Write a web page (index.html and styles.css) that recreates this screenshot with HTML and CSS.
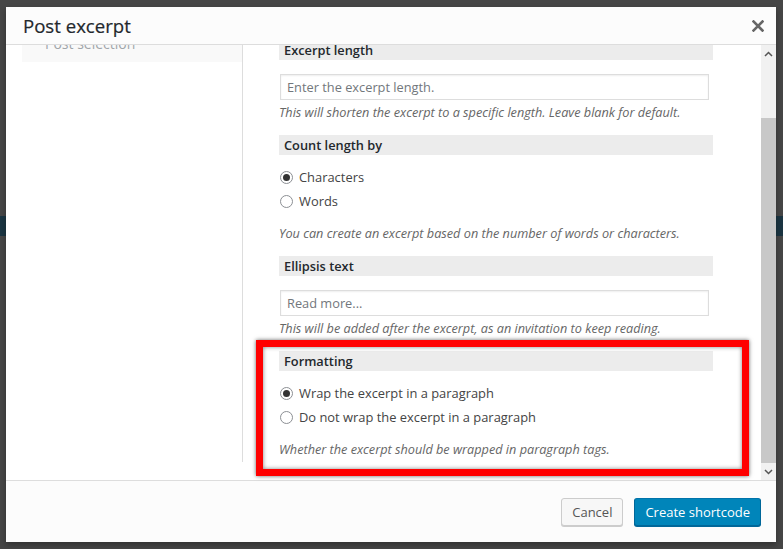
FILE: index.html
```html
<!DOCTYPE html>
<html>
<head>
  <meta charset="UTF-8">
  <title>Post excerpt</title>
  <meta name="viewport" content="width=device-width, initial-scale=1.0"/>
  <link rel="stylesheet" href="styles.css">
</head>
<body>
  <div class="backdrop">
    <div class="backdrop-top"></div>
    <div class="backdrop-band"></div>
  </div>

  <div class="modal">
    <div class="modal-header">
      <h1>Post excerpt</h1>
      <button class="close" type="button" title="Close">
        <svg width="12" height="12" viewBox="0 0 12 12"><path d="M1.5 1.5 L10.5 10.5 M10.5 1.5 L1.5 10.5" stroke="#666" stroke-width="2.6" stroke-linecap="square"/></svg>
      </button>
    </div>

    <div class="modal-body">
      <div class="panes">
        <div class="sidebar">
          <div class="side-item">Post selection</div>
        </div>

        <div class="main">
          <h2 class="sec-title first">Excerpt length</h2>
          <input class="text-field" type="text" placeholder="Enter the excerpt length.">
          <p class="hint">This will shorten the excerpt to a specific length. Leave blank for default.</p>

          <h2 class="sec-title">Count length by</h2>
          <div class="radios">
            <label class="radio-row"><span class="radio checked"></span>Characters</label>
            <label class="radio-row"><span class="radio"></span>Words</label>
          </div>
          <p class="hint spaced">You can create an excerpt based on the number of words or characters.</p>

          <h2 class="sec-title">Ellipsis text</h2>
          <input class="text-field" type="text" placeholder="Read more...">
          <p class="hint">This will be added after the excerpt, as an invitation to keep reading.</p>

          <h2 class="sec-title">Formatting</h2>
          <div class="radios">
            <label class="radio-row"><span class="radio checked"></span>Wrap the excerpt in a paragraph</label>
            <label class="radio-row"><span class="radio"></span>Do not wrap the excerpt in a paragraph</label>
          </div>
          <p class="hint spaced">Whether the excerpt should be wrapped in paragraph tags.</p>
        </div>
      </div>

      <div class="scrollbar">
        <div class="sb-arrow">
          <svg width="9" height="6" viewBox="0 0 9 6"><path d="M1 5 L4.5 1.5 L8 5" fill="none" stroke="#555" stroke-width="1.5"/></svg>
        </div>
        <div class="sb-track"></div>
        <div class="sb-thumb"></div>
        <div class="sb-arrow">
          <svg width="9" height="6" viewBox="0 0 9 6"><path d="M1 1 L4.5 4.5 L8 1" fill="none" stroke="#555" stroke-width="1.5"/></svg>
        </div>
      </div>
    </div>

    <div class="modal-footer">
      <button class="btn" type="button">Cancel</button>
      <button class="btn btn-primary" type="button">Create shortcode</button>
    </div>

    <!-- red marker around the formatting options -->
    <div class="highlight"></div>
  </div>
</body>
</html>
```

FILE: styles.css
```css
* { box-sizing: border-box; }
html, body { margin: 0; height: 100%; }
body { background: #464646; font-family: "Open Sans", sans-serif; overflow: hidden; }

/* dimmed admin page behind the dialog */
.backdrop-top { height: 216px; }
.backdrop-band { height: 20px; background: #1b3542; }

.modal { position: absolute; left: 6px; top: 7px; width: 770px; height: 535px; background: #fff; display: flex; flex-direction: column; box-shadow: 0 3px 6px rgba(0,0,0,0.3); }

.modal-header { height: 38px; flex: none; background: #fcfcfc; border-bottom: 1px solid #ddd; display: flex; align-items: center; justify-content: space-between; padding: 0 10px 0 17px; position: relative; z-index: 2; }
.modal-header h1 { margin: 0; font-size: 18.6px; font-weight: 400; color: #23282d; line-height: 26px; -webkit-text-stroke: 0.2px #23282d; }
.close { background: none; border: none; padding: 0; width: 16px; height: 16px; display: flex; align-items: center; justify-content: center; cursor: pointer; }

.modal-body { flex: 1; display: flex; overflow: hidden; }
.panes { flex: 1; display: flex; align-self: flex-start; }

.sidebar { width: 237px; flex: none; border-right: 1px solid #ddd; padding-left: 16px; }
.side-item { margin-top: -16px; height: 33px; background: #f9f9f9; padding-left: 23px; line-height: 30px; font-size: 14px; color: #a0a5aa; }

.main { flex: 1; padding: 0 48px 4px 36px; }

.sec-title { margin: 14px 0 0; height: 20px; line-height: 20px; background: #ececec; padding-left: 5px; font-size: 12.8px; font-weight: 600; color: #23282d; }
.sec-title.first { margin-top: -5px; }

.text-field { display: block; width: 429px; height: 26px; margin: 14px 0 0 1px; border: 1px solid #ddd; box-shadow: inset 0 1px 2px rgba(0,0,0,0.07); padding: 0 6px; font-family: "Open Sans", sans-serif; font-size: 12.8px; color: #32373c; }
.text-field::placeholder { color: #72777c; }

.hint { margin: 3px 0 0; line-height: 18px; font-size: 12.7px; font-style: italic; color: #666; }
.hint.spaced { margin-top: 11px; }

.radios { margin-top: 10px; }
.radio-row { display: flex; align-items: center; height: 24px; font-size: 12.9px; color: #444; }
.radio { width: 13px; height: 13px; border: 1px solid #8c8f94; border-radius: 50%; margin: 0 6px 0 1px; display: flex; align-items: center; justify-content: center; background: #fff; }
.radio.checked::before { content: ""; width: 7px; height: 7px; border-radius: 50%; background: #333; }

.scrollbar { width: 15px; flex: none; display: flex; flex-direction: column; background: #f1f1f1; }
.sb-arrow { height: 17px; display: flex; align-items: center; justify-content: center; }
.sb-track { height: 56px; }
.sb-thumb { flex: 1; background: #c8c8c8; }

.modal-footer { height: 62px; flex: none; background: #fcfcfc; border-top: 1px solid #ddd; display: flex; align-items: center; justify-content: flex-end; gap: 11px; padding: 0 15px 0 0; }
.btn { height: 28px; padding: 0 10px; font-family: "Open Sans", sans-serif; font-size: 13px; line-height: 26px; border-radius: 3px; border: 1px solid #ccc; background: #f7f7f7; color: #555; box-shadow: 0 1px 0 #ccc; cursor: pointer; }
.btn-primary { background: #0085ba; border-color: #0073aa #006799 #006799; color: #fff; box-shadow: 0 1px 0 #006799; }

.highlight { position: absolute; left: 250px; top: 333px; width: 493px; height: 136px; border: 7px solid #f00; box-shadow: 0 0 4px rgba(0,0,0,0.6), inset 0 0 4px rgba(0,0,0,0.5); pointer-events: none; }
```
